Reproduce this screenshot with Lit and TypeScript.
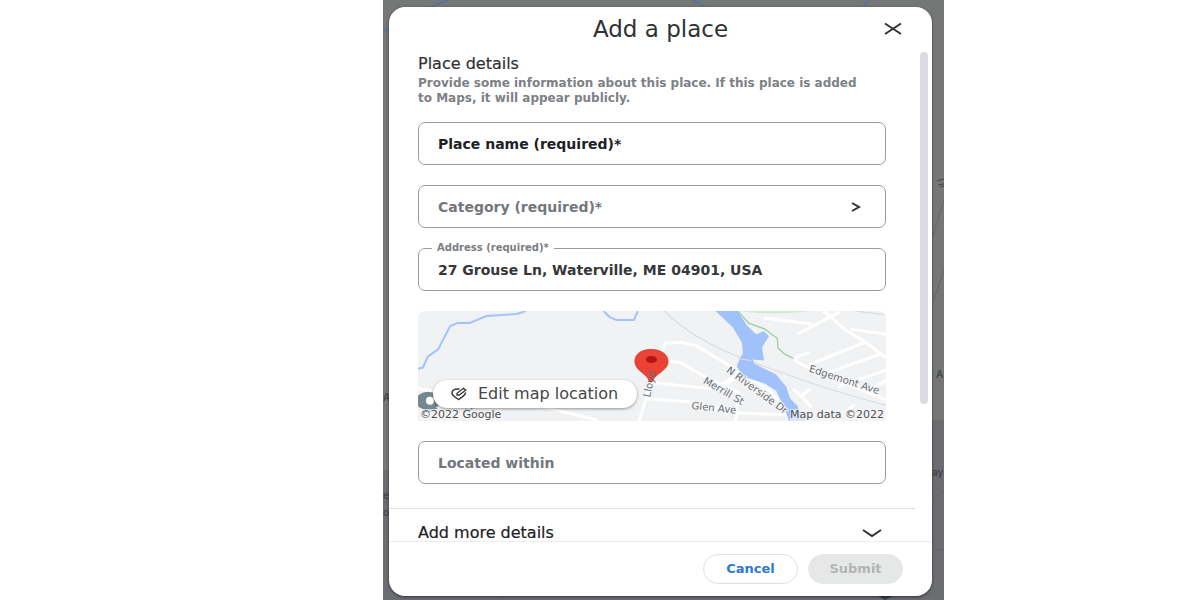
import { LitElement, html, css, svg } from "lit";
import { customElement, property } from "lit/decorators.js";

@customElement("location-map")
class LocationMap extends LitElement {
  static styles = css`
    :host { display: block; position: relative; height: 110px; border-radius: 8px 8px 0 0; overflow: hidden; background: #f0f2f4; }
    .map { display: block; width: 100%; height: 100%; }
    .road { fill: none; stroke: #fff; stroke-width: 3; stroke-linejoin: round; }
    .rail { fill: none; stroke: #d4d6d9; stroke-width: 1; }
    .stream { fill: none; stroke: #a3c3fb; stroke-width: 2; stroke-linejoin: round; }
    .name { font: 400 10px "DejaVu Sans", sans-serif; fill: #686c71; stroke: #f5f6f7; stroke-width: 2px; paint-order: stroke; }
    .bare { stroke: none; }
    .credit { position: absolute; bottom: 0; font: 400 11px/12px "DejaVu Sans", sans-serif; color: #4d5054; background: #f5f5f5b3; }
    .left { left: 2px; }
    .right { right: 2px; }
    .edit { position: absolute; left: 15px; bottom: 13px; height: 28px; padding: 0 19px 0 17px; display: flex; align-items: center; gap: 10px; border: 0; border-radius: 14px; background: #fff; box-shadow: 0 1px 3px #0006; color: #444649; font: 400 16px/20px "DejaVu Sans", sans-serif; white-space: nowrap; }
    .pencil { width: 18px; height: 14px; flex: none; }
  `;
  render() {
    return html`
      <svg class="map" viewBox="0 0 468 109" preserveAspectRatio="xMidYMid slice" role="img" aria-label="Map">
        <path d="M320 0H390Q370 3 340 2Z" fill="#cdebd3"/>
        <path class="rail" d="M246 0C260 14 286 33 327 48S400 76 468 94M435 0L468 4"/>
        <g class="road">
          <path d="M221 109L231 78L247 32L262 31L277 34L309 53L350 78L378 109"/>
          <path d="M249 49L262 51L288 66L320 81L317 109M300 75L320 62"/>
          <path d="M236 71L303 78L319 63"/>
          <path d="M229 87L270 90L320 101L370 103M0 77L60 84L130 96L180 108"/>
          <path d="M404 0L425 18L447 32L468 48"/>
          <path d="M345 7L392 13M378 23L420 1M431 18L468 23M390 53L445 31M403 63L462 42M418 75L468 58M455 75L468 68"/>
          <path d="M390 41L376 46L377 50L392 58L468 89M374 77L392 95M382 84L391 77M417 109L434 93"/>
        </g>
        <path class="stream" d="M0 58L7 56L12 45L22 38L34 15L41 12L53 12L70 5L100 3L109 0M186 0L192 6L199 9L216 9L220 0"/>
        <path d="M297 0H319L328 14L337 23L345 20L350 25L343 36L345 49L334 48L335 52L357 63L367 75L371 87L378 94L380 100L386 109H370L364 94L357 79L346 72L324 65L318 55L321 47L324 42L323 31L314 16Z" fill="#a0c1fa"/>
        <path d="M319 0L330 12L346 18L358 27L359 37L366 43L374 47" fill="none" stroke="#9bcfa7" stroke-width="1.3"/>
        <path d="M319 47L332 49" stroke="#dfe2e5"/>
        <text class="name" transform="translate(307 60) rotate(36)">N Riverside Dr</text>
        <text class="name" transform="translate(284 71) rotate(30)">Merrill St</text>
        <text class="name" transform="translate(273 97) rotate(6)">Glen Ave</text>
        <text class="name" transform="translate(389 60) rotate(18)">Edgemont Ave</text>
        <ellipse cx="12" cy="89" rx="12" ry="9" fill="#748891"/>
        <path d="M3 94L13 101L22 96Z" fill="#748891"/>
        <circle cx="14" cy="89" r="4" fill="#fff"/>
        <path d="M49 97Q53 100 56 96" fill="none" stroke="#748891" stroke-width="1.3"/>
        <path d="M233 38C223 38 217 43 217 50C217 59 229 62 231 69Q233 72 235 69C237 62 250 59 250 50C250 43 243 38 233 38Z" fill="#ea4335" stroke="#cf3c30" stroke-width=".7"/>
        <ellipse cx="233.500" cy="48" rx="5.500" ry="3.500" fill="#b31412"/>
        <text class="name bare" transform="translate(232 86) rotate(-78)">Lloyd</text>
      </svg>
      <span class="credit left">©2022 Google</span>
      <span class="credit right">Map data ©2022</span>
      <button class="edit" type="button">
        <svg class="pencil" viewBox="0 0 18 14" fill="none" stroke="#38393b" stroke-width="1.500">
          <path d="M9.500 2H8C4 2 2 3.500 2 6C2 8.500 5 10 8.500 12.500C12 10 15.500 8.500 15.500 5.500"/>
          <path d="M7 8V6.300L13.500 1.300L15.800 3L9.300 8Z" stroke-width="1.300"/>
        </svg>
        Edit map location
      </button>`;
  }
}

@customElement("text-field")
class TextField extends LitElement {
  @property() label = "";
  @property() value = "";
  @property({ type: Boolean }) strong = false;
  static styles = css`
    :host { display: block; }
    .box { position: relative; height: 43px; }
    .input { box-sizing: border-box; width: 100%; height: 100%; margin: 0; padding: 0 19px; border: 1px solid #9b9c9e; border-radius: 7px; background: #fff; outline: 0; font: 700 14px/20px "DejaVu Sans", sans-serif; color: #36373a; }
    .input::placeholder { color: #73777c; opacity: 1; }
    .strong::placeholder { color: #202124; }
    .label { position: absolute; left: 14px; top: -6px; padding: 0 5px; background: #fff; font: 700 10px/12px "DejaVu Sans", sans-serif; color: #7a7e83; }
  `;
  render() {
    return html`<div class="box">
      ${this.value ? html`<label class="label" for="field">${this.label}</label>` : ""}
      <input id="field" class="input ${this.strong ? "strong" : ""}" aria-label=${this.label} .value=${this.value} placeholder=${this.label}>
    </div>`;
  }
}

const mapLabels = [
  { x: 0, y: 401, text: "A" }, { x: 0, y: 499, text: "e" }, { x: 0, y: 516, text: "o" },
  { x: 549, y: 476, text: "ay" }, { x: 553, y: 378, text: "A" },
];

@customElement("app-root")
class AppRoot extends LitElement {
  static styles = css`
    :host { display: grid; grid-template-columns: 383fr 561fr 256fr; height: 100vh; background: #fff; font-family: "DejaVu Sans", sans-serif; color: #303134; }
    .stage { grid-column: 2; position: relative; min-width: 0; min-height: 0; display: flex; padding: 7px 12px 4px 6px; overflow: hidden; background: #757777; }
    .backdrop { position: absolute; inset: 0; width: 100%; height: 100%; }
    .place { font: 600 10px Inter, sans-serif; fill: #45474a; }
    .dialog { position: relative; flex: 1; min-width: 0; display: flex; flex-direction: column; border-radius: 16px; background: #fff; overflow: hidden; box-shadow: 0 1px 3px #0008; }
    .header { flex: none; height: 45px; display: grid; grid-template-columns: 1fr auto 1fr; align-items: center; padding: 0 29px 2px; box-sizing: border-box; }
    .title { grid-column: 2; margin: 0; font-size: 23px; line-height: 24px; font-weight: 400; }
    .close { justify-self: end; width: 20px; height: 20px; padding: 0; border: 0; background: none; }
    .icon { display: block; fill: none; stroke: #303134; stroke-width: 2; }
    .body { flex: 1; min-height: 0; display: flex; overflow: hidden; }
    .content { flex: 1; min-width: 0; }
    .track { flex: none; width: 17px; padding-left: 5px; box-sizing: border-box; }
    .thumb { width: 8px; height: 72%; border-radius: 4px; background: #dadbe0; }
    .details { padding: 4px 29px 24px; display: flex; flex-direction: column; gap: 20px; }
    .intro { margin-bottom: -4px; }
    .heading { margin: 0; font-size: 16px; line-height: 16px; font-weight: 400; -webkit-text-stroke: 0.2px; }
    .hint { margin: 4px 0 0; padding-right: 13px; font: 700 12px/15px "DejaVu Sans", sans-serif; color: #7d8185; }
    .category { box-sizing: border-box; width: 100%; height: 43px; padding: 0 23px 0 19px; display: flex; justify-content: space-between; align-items: center; border: 1px solid #9b9c9e; border-radius: 7px; background: #fff; font: 700 14px/20px "DejaVu Sans", sans-serif; color: #73777c; }
    .more { width: 100%; padding: 16px 32px 16px 29px; border: 0; border-top: 1px solid #dfe0e1; background: none; display: flex; justify-content: space-between; align-items: center; font: 400 16px/16px "DejaVu Sans", sans-serif; color: #202124; -webkit-text-stroke: 0.2px; box-sizing: border-box; }
    .footer { flex: none; height: 55px; box-sizing: border-box; padding: 0 29px; border-top: 1px solid #ededee; display: flex; justify-content: flex-end; align-items: center; gap: 10px; }
    .action { width: 95px; height: 30px; border-radius: 15px; border: 1px solid #dfe1e4; background: #fff; font: 700 13px/16px "DejaVu Sans", sans-serif; color: #2b79d6; }
    .submit { border-color: #e6e8e7; background: #e6e8e7; color: #b2b4b5; }
  `;
  render() {
    return html`<main class="stage">
      <svg class="backdrop" viewBox="0 0 561 600" preserveAspectRatio="xMidYMid slice" aria-hidden="true">
        <path d="M548 420H561V600H0V470H10V590H548Z" fill="#6c6d70"/>
        <path d="M0 31L8 28M45 8L65 0M310 0L324 8M480 8L486 0" fill="none" stroke="#5871a4" stroke-width="1.500"/>
        <path d="M550 235L561 200M551 300L561 270M550 500L561 490M551 550H561M120 596V600" fill="none" stroke="#646669"/>
        <path d="M554 181L561 179M555 185L561 184M557 187L561 186" stroke="#45474a"/>
        <path d="M495 596H510L502 600Z" fill="#34434c"/>
        ${mapLabels.map((l) => svg`<text class="place" x=${l.x} y=${l.y}>${l.text}</text>`)}
      </svg>
      <section class="dialog" role="dialog" aria-labelledby="title">
        <header class="header">
          <h1 class="title" id="title">Add a place</h1>
          <button class="close" type="button" aria-label="Close">
            <svg class="icon" width="20" height="20" viewBox="0 0 20 20"><path d="M2 4.500L18 15M18 4.500L2 15"/></svg>
          </button>
        </header>
        <div class="body">
          <div class="content">
            <div class="details">
              <div class="intro">
                <h2 class="heading">Place details</h2>
                <p class="hint">Provide some information about this place. If this place is added to Maps, it will appear publicly.</p>
              </div>
              <text-field label="Place name (required)*" strong></text-field>
              <button class="category" type="button">Category (required)*
                <svg class="icon" width="12" height="10" viewBox="0 0 12 10"><path d="M2 1L9 5L2 9"/></svg>
              </button>
              <text-field label="Address (required)*" value="27 Grouse Ln, Waterville, ME 04901, USA"></text-field>
              <location-map></location-map>
              <text-field label="Located within"></text-field>
            </div>
            <button class="more" type="button">Add more details
              <svg class="icon" width="22" height="10" viewBox="0 0 22 10"><path d="M2 2L11 8L20 2"/></svg>
            </button>
          </div>
          <div class="track"><div class="thumb"></div></div>
        </div>
        <footer class="footer">
          <button class="action" type="button">Cancel</button>
          <button class="action submit" type="button" disabled>Submit</button>
        </footer>
      </section>
    </main>`;
  }
}
